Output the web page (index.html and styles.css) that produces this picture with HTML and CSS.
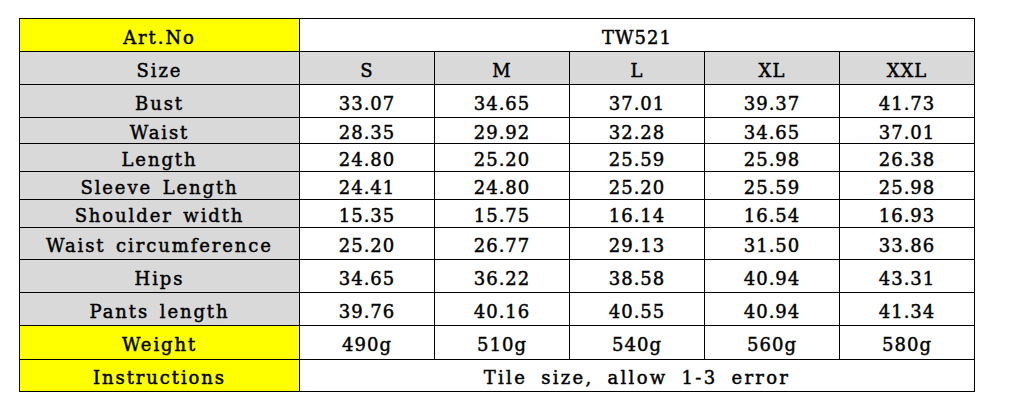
FILE: index.html
```html
<!DOCTYPE html>
<html>
<head>
<meta charset="utf-8">
<link rel="stylesheet" href="styles.css">
</head>
<body>
<table class="sizes">
  <colgroup>
    <col class="c-label">
    <col class="c-val"><col class="c-val"><col class="c-val"><col class="c-val"><col class="c-val">
  </colgroup>
  <tr class="h33"><td class="yellow">Art.No</td><td colspan="5" class="num">TW521</td></tr>
  <tr class="h33"><td class="gray">Size</td><td class="gray num">S</td><td class="gray num">M</td><td class="gray num">L</td><td class="gray num">XL</td><td class="gray num">XXL</td></tr>
  <tr class="h33"><td class="gray">Bust</td><td class="num">33.07</td><td class="num">34.65</td><td class="num">37.01</td><td class="num">39.37</td><td class="num">41.73</td></tr>
  <tr class="h26"><td class="gray">Waist</td><td class="num">28.35</td><td class="num">29.92</td><td class="num">32.28</td><td class="num">34.65</td><td class="num">37.01</td></tr>
  <tr class="h28"><td class="gray">Length</td><td class="num">24.80</td><td class="num">25.20</td><td class="num">25.59</td><td class="num">25.98</td><td class="num">26.38</td></tr>
  <tr class="h28"><td class="gray">Sleeve Length</td><td class="num">24.41</td><td class="num">24.80</td><td class="num">25.20</td><td class="num">25.59</td><td class="num">25.98</td></tr>
  <tr class="h28"><td class="gray">Shoulder width</td><td class="num">15.35</td><td class="num">15.75</td><td class="num">16.14</td><td class="num">16.54</td><td class="num">16.93</td></tr>
  <tr class="h32"><td class="gray">Waist circumference</td><td class="num">25.20</td><td class="num">26.77</td><td class="num">29.13</td><td class="num">31.50</td><td class="num">33.86</td></tr>
  <tr class="h33"><td class="gray">Hips</td><td class="num">34.65</td><td class="num">36.22</td><td class="num">38.58</td><td class="num">40.94</td><td class="num">43.31</td></tr>
  <tr class="h33"><td class="gray">Pants length</td><td class="num">39.76</td><td class="num">40.16</td><td class="num">40.55</td><td class="num">40.94</td><td class="num">41.34</td></tr>
  <tr class="h34"><td class="yellow">Weight</td><td class="num">490g</td><td class="num">510g</td><td class="num">540g</td><td class="num">560g</td><td class="num">580g</td></tr>
  <tr class="h32"><td class="yellow">Instructions</td><td colspan="5" class="note">Tile size, allow 1-3 error</td></tr>
</table>
</body>
</html>
```

FILE: styles.css
```css
html, body {
  margin: 0;
  padding: 0;
  background: #ffffff;
}
body {
  padding: 18px 0 0 19px;
}
.sizes {
  border-collapse: collapse;
  table-layout: fixed;
  width: 956px;
  font-family: "DejaVu Serif", "Liberation Serif", serif;
  font-size: 18px;
  color: #000000;
  letter-spacing: 1.9px;
  word-spacing: 3px;
  -webkit-text-stroke: 0.45px #000000;
}
.c-label { width: 280px; }
.c-val { width: 135px; }
.sizes td {
  border: 1px solid #000000;
  padding: 5px 0 0 0;
  text-align: center;
  vertical-align: middle;
  line-height: 20px;
  white-space: nowrap;
  overflow: hidden;
}
.sizes td.num {
  letter-spacing: 1px;
}
.sizes td.note {
  letter-spacing: 2.3px;
  word-spacing: 6px;
}
.yellow { background: #ffff00; }
.gray { background: #d9d9d9; }
.h26 { height: 26px; }
.h28 { height: 28px; }
.h32 { height: 32px; }
.h33 { height: 33px; }
.h34 { height: 34px; }
```
